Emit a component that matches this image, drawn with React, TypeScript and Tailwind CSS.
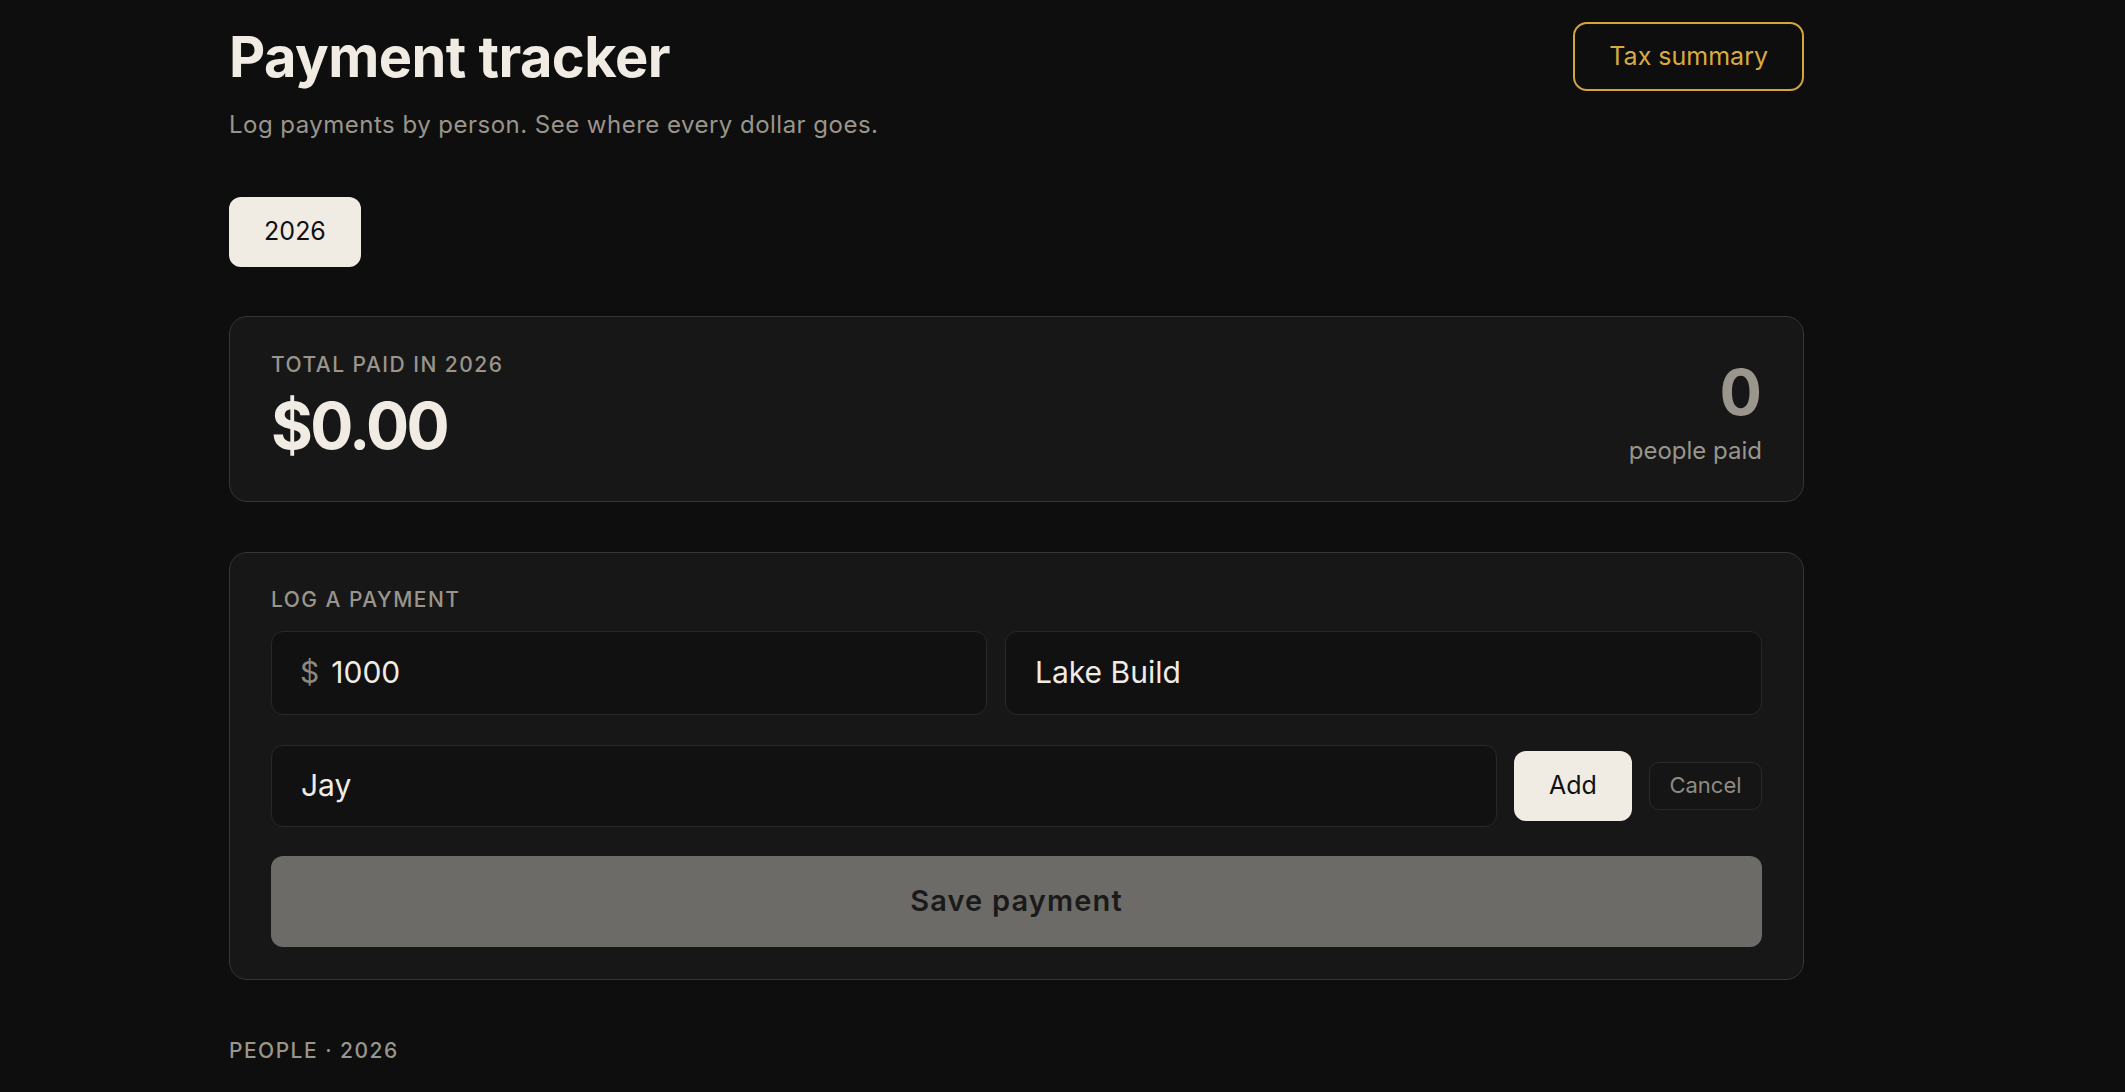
import React from "react";

export default function App() {
  return (
    <div className="min-h-screen bg-[#0e0e0e] text-[#f0ece4] font-['Inter','Noto_Sans',sans-serif]">
      <div className="ml-[229px] w-[1575px] pt-[22px] pb-[80px]">
        <header className="flex items-start justify-between">
          <div className="pt-[5px]">
            <h1 className="text-[56px] font-bold leading-[1.1] tracking-[-0.01em] text-[#f0ece4]">
              Payment tracker
            </h1>
            <p className="mt-[20px] text-[24px] leading-[32px] tracking-[0.02em] text-[#9a958c]">
              Log payments by person. See where every dollar goes.
            </p>
          </div>
          <button className="h-[69px] px-[34px] rounded-[14px] border-2 border-[#d4a53c] text-[25px] text-[#d9aa40] bg-transparent">
            Tax summary
          </button>
        </header>

        <div className="mt-[56px]">
          <button className="w-[132px] h-[70px] rounded-[12px] bg-[#f0ece4] text-[#111111] text-[25px]">
            2026
          </button>
        </div>

        <section className="mt-[49px] flex items-start justify-between rounded-[18px] border border-[#383632] bg-[#171717] px-[41px] pt-[37px] pb-[38px]">
          <div className="mb-[4px]">
            <div className="text-[21px] leading-none font-medium tracking-[0.07em] text-[#9a958c] uppercase">
              Total paid in 2026
            </div>
            <div className="mt-[19px] text-[64px] font-bold leading-none tracking-[-0.04em] text-[#f0ece4]">
              $0.00
            </div>
          </div>
          <div className="mt-[7px] text-right">
            <div className="text-[63px] font-bold leading-none text-[#9b968d]">0</div>
            <div className="mt-[15px] text-[24px] leading-none text-[#9a958c]">people paid</div>
          </div>
        </section>

        <section className="mt-[50px] rounded-[18px] border border-[#383632] bg-[#171717] px-[41px] pt-[36px] pb-[32px]">
          <div className="text-[21px] leading-none font-medium tracking-[0.07em] text-[#9a958c] uppercase">
            Log a payment
          </div>

          <div className="mt-[21px] flex gap-[18px]">
            <div className="w-[716px] h-[84px] flex items-center rounded-[12px] border border-[#282828] bg-[#111111] pl-[28px] pr-[20px]">
              <span className="text-[30px] text-[#8d887f] mr-[12px]">$</span>
              <input
                className="flex-1 min-w-0 bg-transparent outline-none text-[30px] text-[#f0ece4]"
                defaultValue="1000"
              />
            </div>
            <div className="flex-1 h-[84px] flex items-center rounded-[12px] border border-[#282828] bg-[#111111] pl-[29px] pr-[20px]">
              <input
                className="flex-1 min-w-0 bg-transparent outline-none text-[30px] text-[#f0ece4]"
                defaultValue="Lake Build"
              />
            </div>
          </div>

          <div className="mt-[30px] flex items-center gap-[17px]">
            <div className="flex-1 h-[82px] flex items-center rounded-[12px] border border-[#282828] bg-[#111111] pl-[29px] pr-[20px]">
              <input
                className="flex-1 min-w-0 bg-transparent outline-none text-[30px] text-[#f0ece4]"
                defaultValue="Jay"
              />
            </div>
            <button className="w-[118px] h-[70px] rounded-[12px] bg-[#f0ece4] text-[25px] text-[#111111]">
              Add
            </button>
            <button className="w-[113px] h-[48px] rounded-[10px] border border-[#2a2a2a] bg-[#151515] text-[22px] text-[#8f8a82]">
              Cancel
            </button>
          </div>

          <button className="mt-[29px] w-full h-[91px] rounded-[12px] bg-[#6c6b67] text-[29px] font-semibold tracking-[0.04em] text-[#1a1a1a]">
            Save payment
          </button>
        </section>

        <div className="mt-[60px] text-[21px] leading-none font-medium tracking-[0.07em] text-[#9a958c] uppercase">
          People · 2026
        </div>
      </div>
    </div>
  );
}
